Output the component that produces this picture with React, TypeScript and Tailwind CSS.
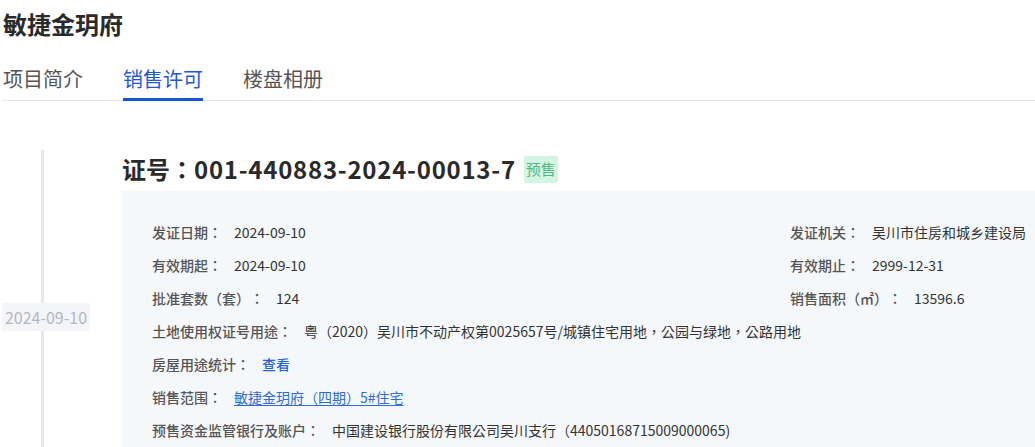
import React from "react";

const font = "font-['Noto_Sans_CJK_TC','Noto_Sans_CJK_SC',sans-serif] [text-spacing-trim:space-all]";

function Row({ label, children }: { label: string; children: React.ReactNode }) {
  return (
    <div className="flex items-center gap-[12px] h-[21px] whitespace-nowrap">
      <span className="font-medium text-[#555]">{label}</span>
      <span className="text-[#333]">{children}</span>
    </div>
  );
}

export default function App() {
  return (
    <div className={`w-[1035px] h-[447px] overflow-hidden bg-white ${font}`}>
      <h1 className="pl-[3px] pt-[8px] text-[24px] font-bold leading-[32px] text-[#2a2a2a]">敏捷金玥府</h1>
      <div className="ml-[2px] mt-[25px] flex gap-[40px] border-b border-[#e6e6e6] pl-[1px] text-[20px] leading-[28px]">
        <div className="pb-[7px] text-[#555]">项目简介</div>
        <div className="relative pb-[7px] text-[#1f57d6]">
          销售许可
          <div className="absolute left-0 right-0 bottom-[-1px] h-[3px] bg-[#1556d6]" />
        </div>
        <div className="pb-[7px] text-[#555]">楼盘相册</div>
      </div>
      <div className="mt-[49px] flex">
        <div className="relative w-[122px] shrink-0">
          <div className="absolute left-[41px] top-0 bottom-0 w-[3px] bg-[#e4e7ee]" />
          <div className="relative ml-[2px] mt-[153px] flex h-[28px] w-[88px] items-center justify-center rounded-[2px] bg-[#f3f5f9] text-[16px] text-[#b2b8c2]">
            2024-09-10
          </div>
        </div>
        <div className="flex-1 pt-[3px]">
          <div className="flex items-center gap-[8px]">
            <span className="text-[24px] font-bold leading-[32px] text-[#2a2a2a]">
              证号：<span className="tracking-[0.75px]">001-440883-2024-00013-7</span>
            </span>
            <span className="flex h-[27px] w-[34px] items-center justify-center rounded-[2px] bg-[#d3f5e1] text-[15px] text-[#55b583]">预售</span>
          </div>
          <div className="mt-[6px] h-[300px] bg-[#f5f8fb] pl-[30px] pt-[31px] text-[14px] leading-[21px]">
            <div className="flex flex-col gap-y-[12px]">
              <div className="grid grid-cols-[638px_1fr]">
                <Row label="发证日期：">2024-09-10</Row>
                <Row label="发证机关：">吴川市住房和城乡建设局</Row>
              </div>
              <div className="grid grid-cols-[638px_1fr]">
                <Row label="有效期起：">2024-09-10</Row>
                <Row label="有效期止：">2999-12-31</Row>
              </div>
              <div className="grid grid-cols-[638px_1fr]">
                <Row label="批准套数（套）：">124</Row>
                <Row label="销售面积（㎡）：">13596.6</Row>
              </div>
              <Row label="土地使用权证号用途：">粤（2020）吴川市不动产权第0025657号/城镇住宅用地，公园与绿地，公路用地</Row>
              <Row label="房屋用途统计：">
                <span className="font-medium text-[#2563d9]">查看</span>
              </Row>
              <Row label="销售范围：">
                <span className="text-[#2f6bdb] underline underline-offset-2">敏捷金玥府（四期）5#住宅</span>
              </Row>
              <Row label="预售资金监管银行及账户：">中国建设银行股份有限公司吴川支行（44050168715009000065)</Row>
            </div>
          </div>
        </div>
      </div>
    </div>
  );
}
